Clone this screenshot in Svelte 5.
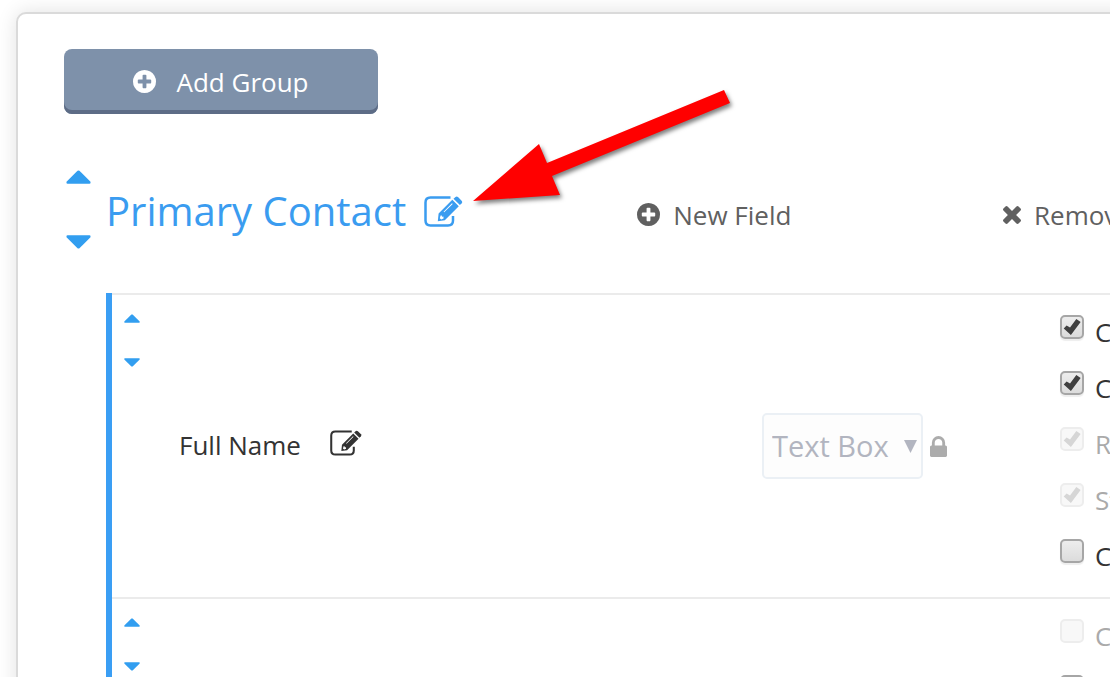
<script>
  const plus = 'M1344 960v-128q0-26-19-45t-45-19h-256v-256q0-26-19-45t-45-19h-128q-26 0-45 19t-19 45v256h-256q-26 0-45 19t-19 45v128q0 26 19 45t45 19h256v256q0 26 19 45t45 19h128q26 0 45-19t19-45v-256h256q26 0 45-19t19-45zm320-64q0 209-103 385.500t-279.500 279.500-385.500 103-385.500-103-279.500-279.500-103-385.500 103-385.500 279.500-279.500 385.500-103 385.500 103 279.500 279.500 103 385.500z';
  const times = 'M1490 1322q0 40-28 68l-136 136q-28 28-68 28t-68-28l-294-294-294 294q-28 28-68 28t-68-28l-136-136q-28-28-28-68t28-68l294-294-294-294q-28-28-28-68t28-68l136-136q28-28 68-28t68 28l294 294 294-294q28-28 68-28t68 28l136 136q28 28 28 68t-28 68l-294 294 294 294q28 28 28 68z';
  const lock = 'M640 768h512v-192q0-106-75-181t-181-75-181 75-75 181v192zm832 96v576q0 40-28 68t-68 28h-960q-40 0-68-28t-28-68v-576q0-40 28-68t68-28h32v-192q0-184 132-316t316-132 316 132 132 316v192h32q40 0 68 28t28 68z';

  const rows = [
    {
      name: 'Full Name',
      type: 'Text Box',
      options: [
        { label: 'Collect', checked: true, disabled: false },
        { label: 'Confirm', checked: true, disabled: false },
        { label: 'Required', checked: true, disabled: true },
        { label: 'Standard', checked: true, disabled: true },
        { label: 'Custom', checked: false, disabled: false }
      ]
    },
    {
      name: 'Email',
      type: 'Text Box',
      options: [
        { label: 'Collect', checked: false, disabled: true },
        { label: 'Confirm', checked: false, disabled: false },
        { label: 'Required', checked: false, disabled: false },
        { label: 'Standard', checked: false, disabled: true },
        { label: 'Custom', checked: false, disabled: false }
      ]
    }
  ];
</script>

{#snippet glyph(d, box = '128 128 1536 1536')}
  <svg class="glyph" viewBox={box} aria-hidden="true"><path {d} /></svg>
{/snippet}

{#snippet editIcon()}
  <svg class="edit-icon" viewBox="0 0 39 31" aria-hidden="true">
    <path class="frame" d="M26.500 1.500H6.500Q1.500 1.500 1.500 6.500V24.500Q1.500 29.500 6.500 29.500H24Q29 29.500 29 24.500V20" />
    <path fill-rule="evenodd" d="M28.300 3.800L34.800 10.300L20.800 24.300L13.800 25.200L14.600 17.500ZM16.600 19.600L15.800 22.200L17.200 23.400L19.600 22.600L19.400 20.600L18 20.800L17.800 19.400ZM28 7.300L19.600 15.700L20.200 16.300L28.700 8Z" />
    <path d="M29.500 2.700L31.500 .9Q32.700 0 34 1.100L37.800 4.900Q38.800 6 37.700 7.200L35.900 9.100Z" />
  </svg>
{/snippet}

{#snippet mover(what)}
  <div class="mover">
    <button aria-label={`Move ${what} up`}><svg viewBox="0 0 26 14"><path d="M12 .6Q13 0 14 .6L25.500 12Q26 14 24.500 14H1.500Q0 14 .5 12Z" /></svg></button>
    <button aria-label={`Move ${what} down`}><svg viewBox="0 0 26 14"><path d="M12 13.400Q13 14 14 13.400L25.500 2Q26 0 24.500 0H1.500Q0 0 .5 2Z" /></svg></button>
  </div>
{/snippet}

<main class="panel">
  <button class="add">{@render glyph(plus)}<span>Add Group</span></button>

  <section>
    <header>
      {@render mover('group')}
      <h1>Primary Contact</h1>
      <button class="edit" aria-label="Edit group name">{@render editIcon()}</button>
      <button class="action new">{@render glyph(plus)}<span>New Field</span></button>
      <button class="action remove">{@render glyph(times, '302 366 1188 1188')}<span>Remove</span></button>
    </header>

    <div class="fields">
      {#each rows as row, r}
        <article>
          {@render mover(row.name)}
          <div class="name">
            <span>{row.name}</span>
            <button class="edit" aria-label={`Edit ${row.name}`}>{@render editIcon()}</button>
          </div>
          <div class="type">
            <div class="select">
              <select disabled aria-label="Field type"><option>{row.type}</option></select>
              <svg viewBox="0 0 13 13" aria-hidden="true"><path d="M0 0H13L6.500 13Z" /></svg>
            </div>
            <span class="lock">{@render glyph(lock, '320 128 1152 1408')}</span>
          </div>
          <div class="options">
            {#each row.options as option, i}
              <div class="option" class:off={option.disabled}>
                <input id={`opt-${r}-${i}`} type="checkbox" checked={option.checked} disabled={option.disabled} />
                <label for={`opt-${r}-${i}`}>{option.label}</label>
              </div>
            {/each}
          </div>
        </article>
      {/each}
    </div>
  </section>
</main>

<svg class="pointer" viewBox="0 0 270 124" aria-hidden="true">
  <path d="M3 111L69 54L77 73L254 0L260 13L82 86L90 105Z" />
</svg>

<style>
  :global(html) {
    overflow: hidden;
    background: #fff;
  }
  :global(body) {
    margin: 0;
    height: 100vh;
    overflow: hidden;
    font-family: 'Open Sans', 'Noto Sans', sans-serif;
    font-size: 26px;
    line-height: 36px;
    color: #333;
  }
  button {
    padding: 0;
    border: 0;
    background: none;
    font: inherit;
    color: inherit;
    cursor: pointer;
  }
  svg {
    display: block;
    flex: none;
    fill: currentColor;
  }
  .panel {
    box-sizing: border-box;
    margin: 12px -24px 0 16px;
    padding: 35px 0 0 46px;
    border: 2px solid #dadada;
    border-radius: 10px;
    background: #fff;
    box-shadow: 0 0 20px rgba(0, 0, 0, 0.12);
  }
  .add {
    display: flex;
    align-items: center;
    justify-content: center;
    gap: 20px;
    width: 314px;
    height: 65px;
    border-radius: 8px;
    background: #7e91aa;
    box-shadow: inset 0 -4px #5d6c86;
    color: #fff;
  }
  .glyph {
    width: 23px;
    height: 23px;
  }
  header {
    display: grid;
    grid-template-columns: 42px auto 39px 1fr 129px;
    align-items: center;
    height: 84px;
    margin-top: 53px;
    color: #3a9cf0;
  }
  h1 {
    margin: 0;
    padding: 4px 18px 0 0;
    font-size: 40px;
    line-height: 56px;
    font-weight: 400;
  }
  header .edit {
    padding-top: 4px;
  }
  .edit-icon {
    width: 39px;
    height: 31px;
  }
  .frame {
    fill: none;
    stroke: currentColor;
    stroke-width: 2.500;
  }
  .action {
    display: flex;
    align-items: center;
    gap: 13px;
    padding-top: 11px;
    white-space: nowrap;
    color: #606060;
  }
  .new {
    margin-left: 174px;
  }
  .remove .glyph {
    width: 18px;
    height: 18px;
  }
  .mover {
    display: flex;
    flex-direction: column;
    gap: 51px;
    color: #329ef0;
  }
  header .mover {
    padding: 1px 0 0 2px;
  }
  header .mover svg {
    width: 25px;
    height: 14px;
  }
  .fields {
    margin: 42px 0 0 42px;
    border-left: 6px solid #3a9ef4;
  }
  article {
    display: grid;
    grid-template-columns: 67px 1fr 298px 72px;
    height: 302px;
    border-top: 2px solid #ebebeb;
  }
  article .mover {
    gap: 35px;
    padding: 19px 0 0 12px;
  }
  article .mover svg {
    width: 16px;
    height: 9px;
  }
  .mover button {
    align-self: flex-start;
  }
  .name,
  .type {
    display: flex;
    align-items: center;
  }
  .name {
    gap: 29px;
    padding-bottom: 2px;
  }
  .name .edit {
    padding-bottom: 4px;
  }
  .name .edit-icon {
    width: 32px;
    height: 26px;
  }
  .type {
    gap: 7px;
  }
  .select {
    position: relative;
  }
  select {
    display: block;
    appearance: none;
    box-sizing: border-box;
    width: 161px;
    height: 66px;
    padding: 0 0 0 8px;
    border: 2px solid #ebf0f5;
    border-radius: 5px;
    background: #fdfdfd;
    font: inherit;
    font-size: 29px;
    color: #b2b5c0;
    opacity: 1;
  }
  .select svg {
    position: absolute;
    top: 27px;
    right: 6px;
    width: 13px;
    height: 13px;
    fill: #b2b5c0;
  }
  .lock {
    color: #acacac;
  }
  .lock .glyph {
    width: 17px;
    height: 21px;
  }
  .options {
    padding-top: 15px;
  }
  .option {
    display: flex;
    align-items: center;
    gap: 11px;
    height: 44px;
    margin-bottom: 12px;
    white-space: nowrap;
  }
  .off {
    color: #aaa;
  }
  input {
    appearance: none;
    box-sizing: border-box;
    flex: none;
    width: 24px;
    height: 24px;
    margin: 0 0 10px;
    border: 2px solid #a6a6a6;
    border-radius: 5px;
    background: linear-gradient(#ededed, #dcdcdc);
    box-shadow: 0 2px 1px #eee;
  }
  input:checked::before {
    content: '';
    display: block;
    width: 18px;
    height: 18px;
    margin: 1px;
    background: #404040;
    clip-path: polygon(4% 58%, 20% 41%, 39% 53%, 74% 5%, 98% 22%, 44% 95%);
  }
  input:disabled {
    border-color: #ededed;
    background: #f8f8f8;
    box-shadow: none;
  }
  input:disabled:checked::before {
    background: #d6d6d6;
  }
  .pointer {
    position: absolute;
    left: 470px;
    top: 90px;
    width: 270px;
    height: 124px;
    fill: #f00;
    filter: drop-shadow(2px 3px 2px rgba(0, 0, 0, 0.5));
    pointer-events: none;
  }
</style>
